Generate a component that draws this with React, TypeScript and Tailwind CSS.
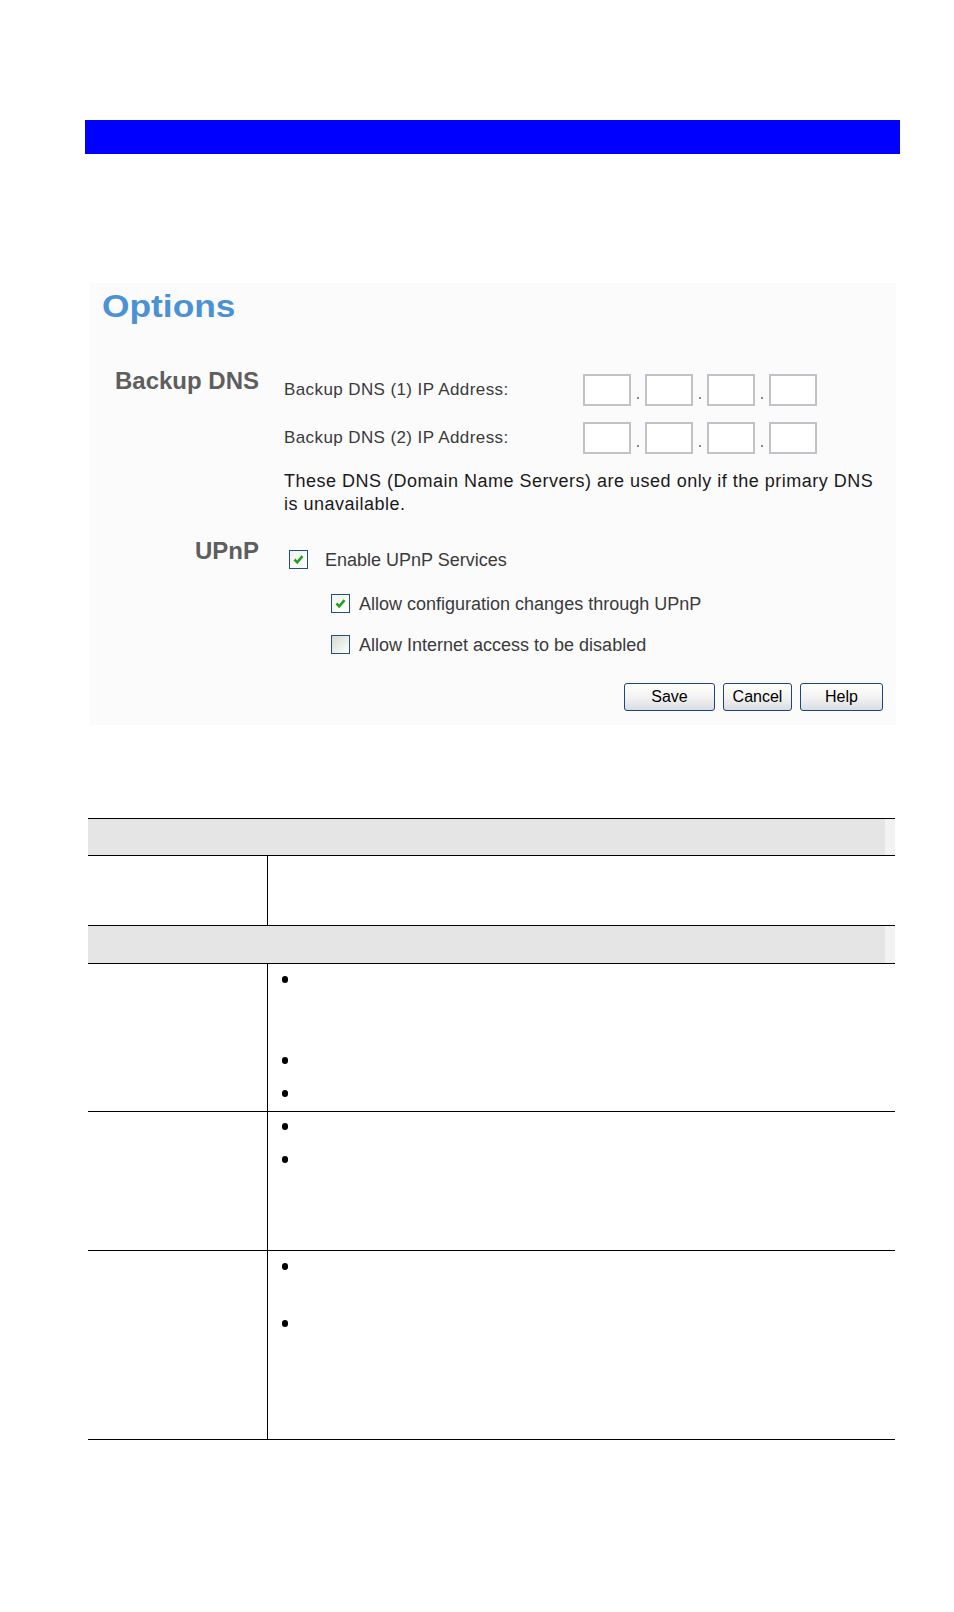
import React from 'react';

const FONT = "font-['Liberation_Sans',Arial,sans-serif]";

function IpField() {
  const Box = () => <div className="w-[48px] h-[32px] bg-white border-2 border-[#bfc3c7]" />;
  const Dot = () => (
    <div className="w-[14px] h-[32px] flex items-end justify-center pb-[7px]">
      <div className="w-[2px] h-[2px] bg-[#8a8a8a]" />
    </div>
  );
  return (
    <div className="flex">
      <Box />
      <Dot />
      <Box />
      <Dot />
      <Box />
      <Dot />
      <Box />
    </div>
  );
}

function Checkbox({ checked }: { checked: boolean }) {
  return (
    <div
      className={`w-[19px] h-[19px] border border-[#1c5180] flex items-center justify-center ${
        checked ? 'bg-gradient-to-br from-[#f2f2ef] to-white' : 'bg-gradient-to-br from-[#d8d8d2] to-white'
      }`}
    >
      {checked && (
        <svg width="13" height="13" viewBox="0 0 13 13">
          <path d="M2.5 6.5 L5.2 9.3 L10.5 3.2" fill="none" stroke="#21a121" strokeWidth="2.6" />
        </svg>
      )}
    </div>
  );
}

function XpButton({ label, width }: { label: string; width: string }) {
  return (
    <button
      className={`${width} h-[28px] rounded-[3px] border border-[#1f4677] bg-gradient-to-b from-white via-[#f3f3f1] to-[#d9dde4] text-[16px] text-black`}
    >
      {label}
    </button>
  );
}

function Bullet({ mt }: { mt: string }) {
  return <div className={`${mt} w-[6px] h-[7px] rounded-full bg-black`} />;
}

export default function App() {
  return (
    <div className={`min-h-[1612px] bg-white pt-[120px] ${FONT}`}>
      {/* blue title bar */}
      <div className="ml-[85px] w-[815px] h-[34px] bg-[#0000ff]" />

      {/* router screen */}
      <div className="ml-[90px] mt-[129px] w-[806px] h-[442px] bg-[#fbfbfb]">
        <div className="pt-[8px] pl-[12px]">
          <h1 className="inline-block origin-left scale-x-[1.14] text-[31px] leading-[31px] font-bold text-[#4a92d4]">
            Options
          </h1>
        </div>

        {/* Backup DNS */}
        <div className="mt-[50px] grid grid-cols-[169px_1fr] gap-x-[25px]">
          <div className="-mt-[5px] text-right text-[24px] leading-[24px] font-bold text-[#5e5e5e]">
            Backup DNS
          </div>
          <div>
            <div className="h-[32px] flex items-center">
              <span className="w-[299px] text-[17px] leading-[20px] tracking-[0.4px] text-[#3a3a3a]">
                Backup DNS (1) IP Address:
              </span>
              <IpField />
            </div>
            <div className="mt-[16px] h-[32px] flex items-center">
              <span className="w-[299px] text-[17px] leading-[20px] tracking-[0.4px] text-[#3a3a3a]">
                Backup DNS (2) IP Address:
              </span>
              <IpField />
            </div>
            <p className="mt-[16px] w-[600px] text-[18px] leading-[23px] tracking-[0.5px] text-[#1a1a1a]">
              These DNS (Domain Name Servers) are used only if the primary DNS is unavailable.
            </p>
          </div>
        </div>

        {/* UPnP */}
        <div className="mt-[25px] grid grid-cols-[169px_1fr] gap-x-[25px]">
          <div className="-mt-[2px] text-right text-[24px] leading-[24px] font-bold text-[#5e5e5e]">
            UPnP
          </div>
          <div>
            <div className="mt-[9px] h-[19px] flex items-center pl-[5px]">
              <Checkbox checked />
              <span className="ml-[17px] text-[18px] leading-[20px] text-[#3a3a3a]">Enable UPnP Services</span>
            </div>
            <div className="mt-[25px] h-[19px] flex items-center pl-[47px]">
              <Checkbox checked />
              <span className="ml-[9px] text-[18px] leading-[20px] text-[#3a3a3a]">
                Allow configuration changes through UPnP
              </span>
            </div>
            <div className="mt-[22px] h-[19px] flex items-center pl-[47px]">
              <Checkbox checked={false} />
              <span className="ml-[9px] text-[18px] leading-[20px] text-[#3a3a3a]">
                Allow Internet access to be disabled
              </span>
            </div>
          </div>
        </div>

        <div className="mt-[29px] flex justify-end gap-[8px] pr-[13px]">
          <XpButton label="Save" width="w-[91px]" />
          <XpButton label="Cancel" width="w-[69px]" />
          <XpButton label="Help" width="w-[83px]" />
        </div>
      </div>

      {/* description table */}
      <div className="ml-[88px] mt-[93px] w-[807px]">
        <div className="h-[37px] border-t border-black flex">
          <div className="flex-1 bg-[#e5e5e5]" />
          <div className="w-[10px] bg-[#f2f2f2]" />
        </div>
        <div className="h-[70px] border-t border-black flex">
          <div className="w-[180px] border-r border-black" />
          <div className="flex-1" />
        </div>
        <div className="h-[38px] border-t border-black flex">
          <div className="flex-1 bg-[#e5e5e5]" />
          <div className="w-[10px] bg-[#f2f2f2]" />
        </div>
        <div className="h-[148px] border-t border-black flex">
          <div className="w-[180px] border-r border-black" />
          <div className="flex-1 pl-[14px] flex flex-col">
            <Bullet mt="mt-[12px]" />
            <Bullet mt="mt-[74px]" />
            <Bullet mt="mt-[26px]" />
          </div>
        </div>
        <div className="h-[139px] border-t border-black flex">
          <div className="w-[180px] border-r border-black" />
          <div className="flex-1 pl-[14px] flex flex-col">
            <Bullet mt="mt-[11px]" />
            <Bullet mt="mt-[26px]" />
          </div>
        </div>
        <div className="h-[190px] border-t border-b border-black flex">
          <div className="w-[180px] border-r border-black" />
          <div className="flex-1 pl-[14px] flex flex-col">
            <Bullet mt="mt-[12px]" />
            <Bullet mt="mt-[50px]" />
          </div>
        </div>
      </div>
    </div>
  );
}
